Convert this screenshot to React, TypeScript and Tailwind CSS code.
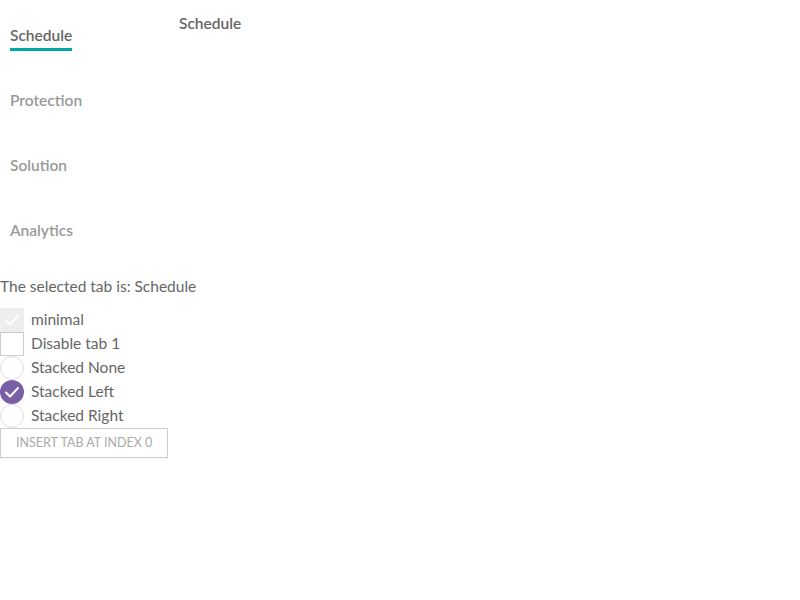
import React, {useState} from 'react';

const tabs = ['Schedule', 'Protection', 'Solution', 'Analytics'];

function Check({className}: {className?: string}) {
  return (
    <svg className={className} viewBox="0 0 24 24" fill="none">
      <path
        d="M6 12.5L10 16.5L18 8"
        stroke="white"
        strokeWidth="2"
        strokeLinecap="round"
        strokeLinejoin="round"
      />
    </svg>
  );
}

export default function App() {
  const [selected] = useState(0);
  const stacked = 'left';
  return (
    <div
      className="text-[15.5px] text-[#666]"
      style={{fontFamily: '"Lato", "Liberation Sans", sans-serif'}}
    >
      <div className="flex">
        <div className="flex flex-col w-[179px]">
          {tabs.map((t, i) => (
            <div key={t} className="h-[65px] px-[10px] pt-[24px]">
              <span
                className={
                  'inline-block font-semibold leading-[20px] pb-[3px] border-b-[3px] ' +
                  (i === selected
                    ? 'text-[#666] border-[#00a9a6]'
                    : 'text-[#999] border-transparent')
                }
              >
                {t}
              </span>
            </div>
          ))}
        </div>
        <div className="pt-[13px] font-semibold leading-[20px]">
          {tabs[selected]}
        </div>
      </div>

      <div className="pt-[16px] leading-[20px]">
        The selected tab is: {tabs[selected]}
      </div>

      <div className="mt-[12px] flex flex-col leading-[22px]">
        <label className="flex items-center h-6 gap-[7px]">
          <span className="w-6 h-6 bg-[#eee] flex items-center justify-center">
            <Check className="w-6 h-6" />
          </span>
          <span className="-mt-[2px]">minimal</span>
        </label>
        <label className="flex items-center h-6 gap-[7px]">
          <span className="w-6 h-6 border border-[#ccc] bg-white" />
          <span className="-mt-[2px]">Disable tab 1</span>
        </label>
        {['None', 'Left', 'Right'].map((s) => (
          <label key={s} className="flex items-center h-6 gap-[7px]">
            {stacked === s.toLowerCase() ? (
              <span className="w-6 h-6 rounded-full bg-[#7b5ea6] flex items-center justify-center">
                <Check className="w-6 h-6" />
              </span>
            ) : (
              <span className="w-6 h-6 rounded-full border border-[#ddd] bg-white" />
            )}
            <span className="-mt-[2px]">Stacked {s}</span>
          </label>
        ))}
      </div>

      <button className="h-[30px] px-[15px] border border-[#ccc] bg-white text-[12.5px] text-[#aaa] uppercase">
        Insert tab at index 0
      </button>
    </div>
  );
}
